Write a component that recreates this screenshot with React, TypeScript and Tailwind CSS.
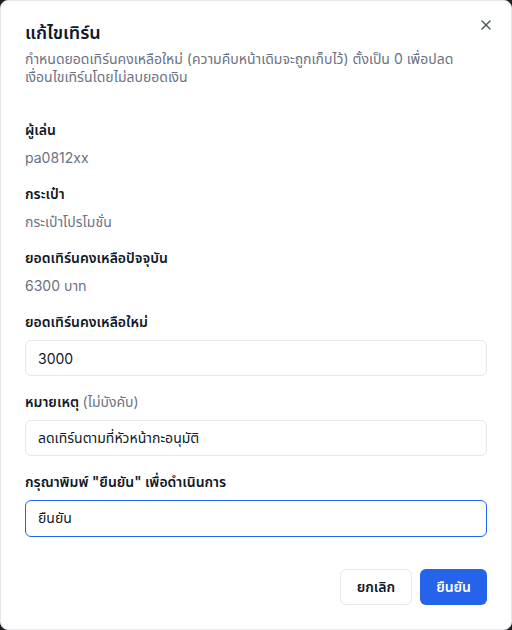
import { X } from "lucide-react";

const fontStack = { fontFamily: '"Inter", "Noto Sans", "Noto Sans Thai", sans-serif' };

function InfoRow({ label, value }: { label: string; value: string }) {
  return (
    <div>
      <p className="text-sm font-semibold leading-5 text-gray-900">{label}</p>
      <p className="mt-2 text-sm leading-5 text-gray-500">{value}</p>
    </div>
  );
}

export default function App() {
  return (
    <div className="min-h-[630px] bg-[#1f1f1f]" style={fontStack}>
      <div className="relative flex h-[630px] w-full flex-col rounded-lg border border-gray-200 bg-white px-6 pb-6 pt-[18px]">
        <button className="absolute right-[17px] top-[16px] text-gray-600" type="button">
          <X size={16} strokeWidth={2} />
        </button>

        <div>
          <h2 className="text-lg font-semibold leading-7 text-gray-900">แก้ไขเทิร์น</h2>
          <p className="mt-[3px] pr-4 text-sm leading-[18px] text-gray-500">
            กำหนดยอดเทิร์นคงเหลือใหม่ (ความคืบหน้าเดิมจะถูกเก็บไว้) ตั้งเป็น 0 เพื่อปลดเงื่อนไขเทิร์นโดยไม่ลบยอดเงิน
          </p>
        </div>

        <div className="mt-[34px] space-y-4">
          <InfoRow label="ผู้เล่น" value="pa0812xx" />
          <InfoRow label="กระเป๋า" value="กระเป๋าโปรโมชั่น" />
          <InfoRow label="ยอดเทิร์นคงเหลือปัจจุบัน" value="6300 บาท" />

          <div>
            <label className="block text-sm font-semibold leading-5 text-gray-900">ยอดเทิร์นคงเหลือใหม่</label>
            <input
              className="mt-2 h-9 w-full rounded-md border border-gray-200 bg-white px-3 text-sm text-gray-900 outline-none"
              defaultValue="3000"
            />
          </div>

          <div>
            <label className="block text-sm font-semibold leading-5 text-gray-900">
              หมายเหตุ <span className="font-normal text-gray-500">(ไม่บังคับ)</span>
            </label>
            <input
              className="mt-2 h-9 w-full rounded-md border border-gray-200 bg-white px-3 text-sm text-gray-900 outline-none"
              defaultValue="ลดเทิร์นตามที่หัวหน้ากะอนุมัติ"
            />
          </div>

          <div>
            <label className="block text-sm font-semibold leading-5 text-gray-900">กรุณาพิมพ์ "ยืนยัน" เพื่อดำเนินการ</label>
            <input
              className="mt-2 h-[37px] w-full rounded-md border border-[#2563eb] bg-white px-3 text-sm text-gray-900 outline-none"
              defaultValue="ยืนยัน"
            />
          </div>
        </div>

        <div className="mt-auto flex justify-end gap-2">
          <button className="h-9 rounded-md border border-gray-200 bg-white px-4 text-sm font-semibold text-gray-900" type="button">
            ยกเลิก
          </button>
          <button className="h-9 rounded-md bg-[#2563eb] px-4 text-sm font-semibold text-white" type="button">
            ยืนยัน
          </button>
        </div>
      </div>
    </div>
  );
}
